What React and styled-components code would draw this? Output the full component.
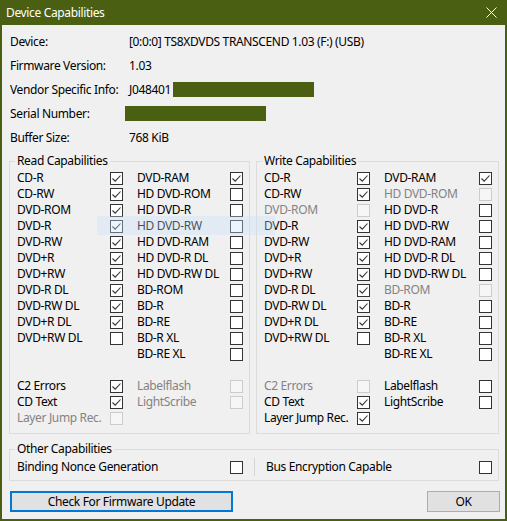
import React from 'react'
import styled, { createGlobalStyle } from 'styled-components';

const GlobalStyle = createGlobalStyle`
  html, body {
    margin: 0;
    padding: 0;
    background: #f0f0f0;
  }
  * { box-sizing: border-box; }
`

const GREEN = '#4b5f12';

const Window = styled.div`
  position: relative;
  width: 507px;
  height: 521px;
  display: flex;
  flex-direction: column;
  border: 2px solid ${GREEN};
  border-top: none;
  background: #f0f0f0;
  font-family: "Noto Sans", "Open Sans", sans-serif;
  font-size: 12px;
  letter-spacing: -0.35px;
  color: #000;
`
const TitleBar = styled.div`
  height: 25px;
  margin: 0 -2px;
  padding: 0 10px 0 6px;
  display: flex;
  align-items: center;
  justify-content: space-between;
  background: ${GREEN};
  color: #fff;
  font-size: 12px;
`
const CloseIcon = () => (
  <svg width="11" height="11" viewBox="0 0 11 11">
    <path d="M0.5 0.5 L10.5 10.5 M10.5 0.5 L0.5 10.5" stroke="#fff" strokeWidth="1" fill="none" />
  </svg>
)
const Body = styled.div`
  flex: 1;
  padding: 4px 7px 0 7px;
  display: flex;
  flex-direction: column;
`
const InfoRow = styled.div`
  height: 24px;
  display: flex;
  align-items: center;
  padding-left: 1px;
`
const InfoLabel = styled.span`
  width: 119px;
  flex: none;
`
const InfoValue = styled.span`
  white-space: nowrap;
`
const Redacted = styled.span`
  display: inline-block;
  width: 141px;
  height: 15px;
  margin-left: ${p => p.$offset}px;
  background: ${GREEN};
`
const Groups = styled.div`
  display: grid;
  grid-template-columns: 241px 243px;
  column-gap: 6px;
  margin-top: 4px;
`
const Group = styled.fieldset`
  margin: 0;
  min-width: 0;
  border: 1px solid #dcdcdc;
  padding: 1px 6px ${p => p.$bottom}px 7px;
`
const Legend = styled.legend`
  padding: 0 2px;
  margin-left: -2px;
  line-height: 16px;
  font-size: 12px;
`
const CapGrid = styled.div`
  display: grid;
  grid-template-columns: 93px 13px 1fr 13px;
  grid-auto-rows: 16px;
  align-items: center;
`
const Label = styled.span`
  white-space: nowrap;
  line-height: 16px;
  color: ${p => (p.$disabled ? '#838383' : '#000')};
  padding-left: ${p => (p.$second ? 14 : 0)}px;
`
const Box = styled.span`
  width: 13px;
  height: 13px;
  display: block;
  border: 1px solid ${p => (p.$disabled ? '#cccccc' : '#333333')};
  background: ${p => (p.$disabled ? '#f6f6f6' : '#ffffff')};
  svg { display: block; }
`
const Spacer = styled.div`
  grid-column: 1 / -1;
`
const Check = ({ on, disabled }) => (
  <Box $disabled={disabled}>
    {on && (
      <svg width="11" height="11" viewBox="0 0 11 11">
        <path d="M1.5 5.5 L4.2 8.2 L9.5 2.5" stroke="#333" strokeWidth="1.1" fill="none" />
      </svg>
    )}
  </Box>
)

const OtherGroup = styled(Group)`
  margin-top: 7px;
  width: 490px;
`
const OtherRow = styled.div`
  display: grid;
  grid-template-columns: 1fr 13px 23px 1fr 13px;
  height: 16px;
  align-items: center;
`
const Divider = styled.span`
  justify-self: center;
  width: 1px;
  height: 18px;
  background: #d5d5d5;
`
const Buttons = styled.div`
  display: flex;
  justify-content: space-between;
  margin-top: 10px;
  padding-left: 1px;
  width: 491px;
`
const Button = styled.button`
  height: 21px;
  width: ${p => p.$w}px;
  padding: 0;
  background: #e1e1e1;
  border: ${p => (p.$focused ? '2px solid #0078d7' : '1px solid #adadad')};
  font-family: "Noto Sans", "Open Sans", sans-serif;
  font-size: 12px;
  letter-spacing: -0.35px;
  color: #000;
`
const TooltipGhost = styled.div`
  position: absolute;
  left: 95px;
  top: 216px;
  width: 178px;
  height: 19px;
  background: rgba(200, 225, 248, 0.35);
  pointer-events: none;
`

const L = (label, on = false, disabled = false) => ({ label, on, disabled })

const read = {
  media: [
    [L('CD-R', true), L('DVD-RAM', true)],
    [L('CD-RW', true), L('HD DVD-ROM')],
    [L('DVD-ROM', true), L('HD DVD-R')],
    [L('DVD-R', true), L('HD DVD-RW')],
    [L('DVD-RW', true), L('HD DVD-RAM')],
    [L('DVD+R', true), L('HD DVD-R DL')],
    [L('DVD+RW', true), L('HD DVD-RW DL')],
    [L('DVD-R DL', true), L('BD-ROM')],
    [L('DVD-RW DL', true), L('BD-R')],
    [L('DVD+R DL', true), L('BD-RE')],
    [L('DVD+RW DL'), L('BD-R XL')],
    [null, L('BD-RE XL')],
  ],
  extra: [
    [L('C2 Errors', true), L('Labelflash', false, true)],
    [L('CD Text', true), L('LightScribe', false, true)],
    [L('Layer Jump Rec.', false, true), null],
  ],
}

const write = {
  media: [
    [L('CD-R', true), L('DVD-RAM', true)],
    [L('CD-RW', true), L('HD DVD-ROM', false, true)],
    [L('DVD-ROM', false, true), L('HD DVD-R')],
    [L('DVD-R', true), L('HD DVD-RW')],
    [L('DVD-RW', true), L('HD DVD-RAM')],
    [L('DVD+R', true), L('HD DVD-R DL')],
    [L('DVD+RW', true), L('HD DVD-RW DL')],
    [L('DVD-R DL', true), L('BD-ROM', false, true)],
    [L('DVD-RW DL', true), L('BD-R')],
    [L('DVD+R DL', true), L('BD-RE')],
    [L('DVD+RW DL'), L('BD-R XL')],
    [null, L('BD-RE XL')],
  ],
  extra: [
    [L('C2 Errors', false, true), L('Labelflash')],
    [L('CD Text', true), L('LightScribe')],
    [L('Layer Jump Rec.', true), null],
  ],
}

const Cell = ({ item, second }) =>
  item ? (
    <>
      <Label $disabled={item.disabled} $second={second}>{item.label}</Label>
      <Check on={item.on} disabled={item.disabled} />
    </>
  ) : (
    <>
      <span />
      <span />
    </>
  )

const CapGroup = ({ title, data }) => (
  <Group $bottom={7}>
    <Legend>{title}</Legend>
    <CapGrid>
      {data.media.map((row, i) => (
        <React.Fragment key={'m' + i}>
          <Cell item={row[0]} />
          <Cell item={row[1]} second />
        </React.Fragment>
      ))}
      <Spacer />
      {data.extra.map((row, i) => (
        <React.Fragment key={'e' + i}>
          <Cell item={row[0]} />
          <Cell item={row[1]} second />
        </React.Fragment>
      ))}
    </CapGrid>
  </Group>
)

const App = () => {
  return (
    <>
      <GlobalStyle />
      <Window>
        <TitleBar>
          <span>Device Capabilities</span>
          <CloseIcon />
        </TitleBar>
        <Body>
          <InfoRow>
            <InfoLabel>Device:</InfoLabel>
            <InfoValue>[0:0:0] TS8XDVDS TRANSCEND 1.03 (F:) (USB)</InfoValue>
          </InfoRow>
          <InfoRow>
            <InfoLabel>Firmware Version:</InfoLabel>
            <InfoValue>1.03</InfoValue>
          </InfoRow>
          <InfoRow>
            <InfoLabel>Vendor Specific Info:</InfoLabel>
            <InfoValue>J048401</InfoValue>
            <Redacted $offset={2} />
          </InfoRow>
          <InfoRow>
            <InfoLabel>Serial Number:</InfoLabel>
            <Redacted $offset={-4} />
          </InfoRow>
          <InfoRow>
            <InfoLabel>Buffer Size:</InfoLabel>
            <InfoValue>768 KiB</InfoValue>
          </InfoRow>

          <Groups>
            <CapGroup title="Read Capabilities" data={read} />
            <CapGroup title="Write Capabilities" data={write} />
          </Groups>

          <OtherGroup $bottom={6}>
            <Legend>Other Capabilities</Legend>
            <OtherRow>
              <Label>Binding Nonce Generation</Label>
              <Check />
              <Divider />
              <Label>Bus Encryption Capable</Label>
              <Check />
            </OtherRow>
          </OtherGroup>

          <Buttons>
            <Button $w={223} $focused>Check For Firmware Update</Button>
            <Button $w={73}>OK</Button>
          </Buttons>
        </Body>
        <TooltipGhost />
      </Window>
    </>
  )
}

export default App
